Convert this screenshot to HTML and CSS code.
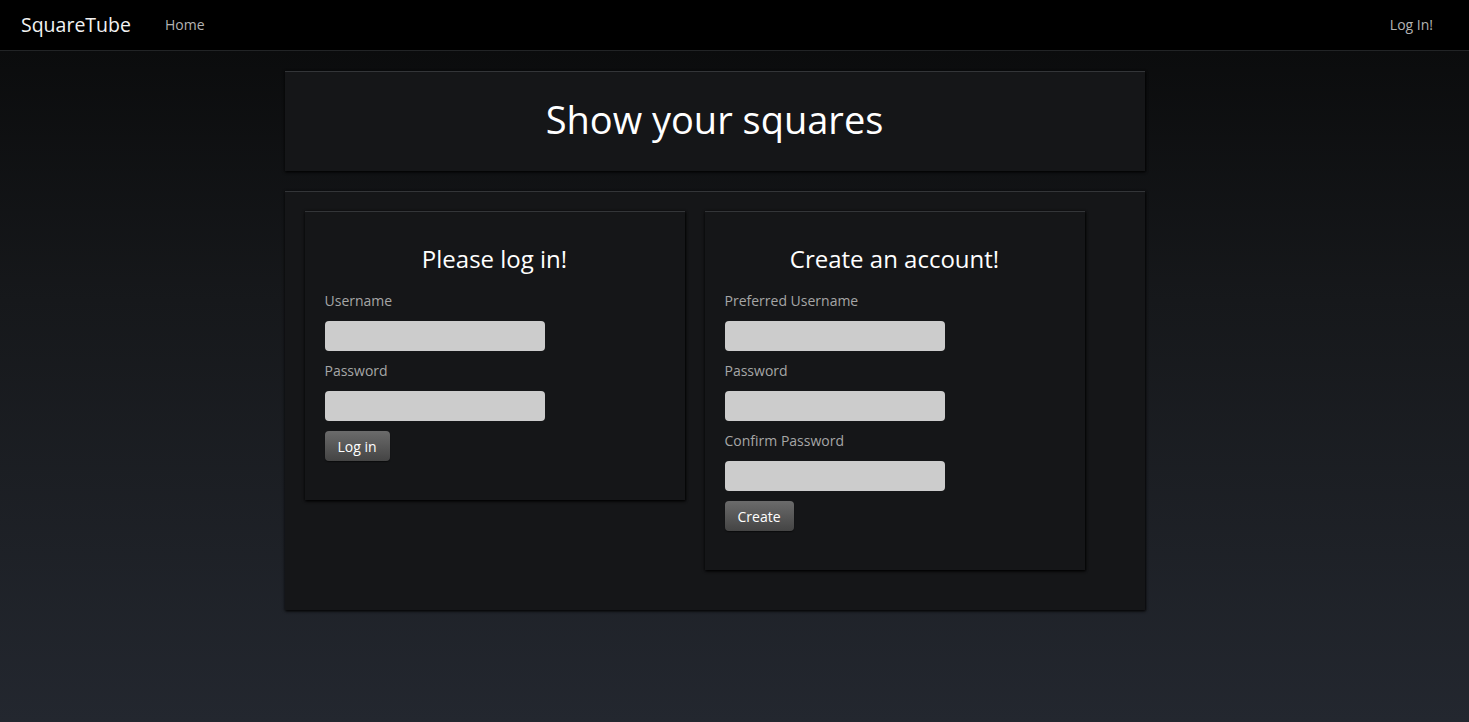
FILE: index.html
```html
<!DOCTYPE html>
<html>
<head>
<meta charset="utf-8">
<title>SquareTube</title>
<link rel="stylesheet" href="styles.css">
</head>
<body>
<header class="navbar">
  <div class="nav-left">
    <a class="brand" href="#">SquareTube</a>
    <a class="nav-link" href="#">Home</a>
  </div>
  <a class="nav-link login-link" href="#">Log In!</a>
</header>
<main class="container">
  <section class="hero panel">
    <h1>Show your squares</h1>
  </section>
  <section class="content panel">
    <div class="cards">
      <form class="card">
        <h2>Please log in!</h2>
        <label>Username</label>
        <input type="text">
        <label>Password</label>
        <input type="password">
        <button type="button">Log in</button>
      </form>
      <form class="card">
        <h2>Create an account!</h2>
        <label>Preferred Username</label>
        <input type="text">
        <label>Password</label>
        <input type="password">
        <label>Confirm Password</label>
        <input type="password">
        <button type="button">Create</button>
      </form>
    </div>
  </section>
</main>
</body>
</html>
```
FILE: styles.css
```css
html { height: 100%; }
body {
  margin: 0;
  min-height: 722px;
  font-family: "Open Sans", "DejaVu Sans", sans-serif;
  background: linear-gradient(to bottom, #0b0c0d 50px, #16181b 300px, #23272f 722px);
  color: #eee;
}
.navbar {
  height: 51px;
  background: #000;
  border-bottom: 1px solid #222426;
  display: flex;
  align-items: center;
  justify-content: space-between;
  padding: 0 36px 1px 21px;
  box-sizing: border-box;
}
.nav-left { display: flex; align-items: center; }
.brand {
  color: #f2f2f2;
  font-size: 19.5px;
  text-decoration: none;
  margin-right: 34px;
}
.nav-link {
  color: #b3b3b3;
  font-size: 14px;
  text-decoration: none;
}
.container {
  width: 940px;
  box-sizing: border-box;
  padding: 0 60px 0 20px;
  margin: 20px auto 0;
}
.panel {
  background: #151618;
  border-top: 1px solid #333538;
  box-shadow: 0 1px 3px rgba(0,0,0,0.8), 1px 1px 2px rgba(0,0,0,0.6);
}
.hero {
  height: 100px;
  box-sizing: border-box;
  padding-bottom: 5px;
  display: flex;
  align-items: center;
  justify-content: center;
  margin-bottom: 20px;
}
.hero h1 {
  margin: 0;
  font-size: 38px;
  font-weight: normal;
  color: #fff;
}
.content {
  padding: 19px 20px 40px;
}
.cards {
  display: flex;
  align-items: flex-start;
  gap: 20px;
}
.card {
  width: 380px;
  box-sizing: border-box;
  background: #151618;
  border-top: 1px solid #333538;
  box-shadow: 0 1px 3px rgba(0,0,0,0.9), 1px 1px 2px rgba(0,0,0,0.7);
  padding: 20px 20px 39px;
  display: flex;
  flex-direction: column;
  align-items: flex-start;
}
.card h2 {
  align-self: stretch;
  text-align: center;
  font-size: 24px;
  font-weight: normal;
  color: #fff;
  margin: 11px 0 16px;
  line-height: 32px;
}
.card label {
  font-size: 14px;
  color: #a6a6a6;
  line-height: 20px;
  margin-bottom: 10px;
}
.card input {
  width: 220px;
  height: 30px;
  box-sizing: border-box;
  border: 0;
  border-radius: 4px;
  background: #cccccc;
  margin: 0 0 10px;
}
.card button {
  font-family: inherit;
  font-size: 14px;
  color: #fff;
  height: 30px;
  padding: 0 13px;
  border: 0;
  border-radius: 4px;
  background: linear-gradient(to bottom, #6b6b6b, #444);
  box-shadow: 0 1px 1px rgba(0,0,0,0.5);
}
```
